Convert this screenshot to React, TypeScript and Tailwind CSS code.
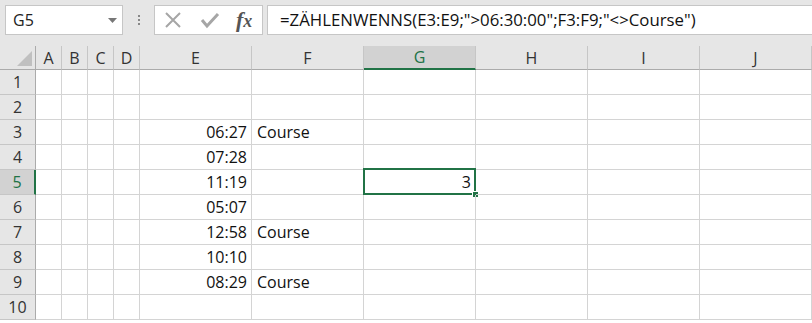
import React from "react";

const cols = [
  { key: "A", w: "w-[26px]" },
  { key: "B", w: "w-[26px]" },
  { key: "C", w: "w-[26px]" },
  { key: "D", w: "w-[26px]" },
  { key: "E", w: "w-[112px]" },
  { key: "F", w: "w-[112px]" },
  { key: "G", w: "w-[112px]" },
  { key: "H", w: "w-[112px]" },
  { key: "I", w: "w-[112px]" },
  { key: "J", w: "w-[112px]" },
];

const data: Record<number, { E?: string; F?: string; G?: string }> = {
  3: { E: "06:27", F: "Course" },
  4: { E: "07:28" },
  5: { E: "11:19", G: "3" },
  6: { E: "05:07" },
  7: { E: "12:58", F: "Course" },
  8: { E: "10:10" },
  9: { E: "08:29", F: "Course" },
};

const rows = [1, 2, 3, 4, 5, 6, 7, 8, 9, 10];

const FormulaBar = () => (
  <div className="flex items-start h-[46px] bg-[#e6e6e6] pt-[5px] pl-[5px]">
    <div className="flex items-center justify-between w-[118px] h-[30px] bg-white border border-[#c6c6c6] pl-[7px] pr-[5px]">
      <span className="text-[16px] text-[#222]">G5</span>
      <svg width="9" height="5" viewBox="0 0 9 5">
        <path d="M0 0 L9 0 L4.5 5 Z" fill="#777" />
      </svg>
    </div>
    <div className="flex flex-col items-center gap-[2px] w-[31px] h-[30px] justify-center">
      <span className="w-[2px] h-[2px] bg-[#888]" />
      <span className="w-[2px] h-[2px] bg-[#888]" />
      <span className="w-[2px] h-[2px] bg-[#888]" />
    </div>
    <div className="flex items-center w-[109px] h-[30px] bg-white border border-[#c6c6c6] pl-[9px]">
      <svg width="18" height="18" viewBox="0 0 18 18">
        <path d="M2 2 L16 16 M16 2 L2 16" stroke="#a6a6a6" strokeWidth="2" />
      </svg>
      <svg width="20" height="18" viewBox="0 0 20 18" className="ml-[18px]">
        <path d="M2 9 L7 15 L18 3" stroke="#a6a6a6" strokeWidth="3" fill="none" />
      </svg>
      <span
        className="ml-[16px] text-[22px] italic font-bold text-[#555] leading-none"
        style={{ fontFamily: '"Liberation Serif", serif' }}
      >
        f<span className="text-[18px]">x</span>
      </span>
    </div>
    <div className="flex items-center flex-1 h-[30px] bg-white border-y border-l border-[#c6c6c6] ml-[4px] pl-[12px]">
      <span className="text-[16.8px] text-[#111] whitespace-nowrap">
        =ZÄHLENWENNS(E3:E9;"&gt;06:30:00";F3:F9;"&lt;&gt;Course")
      </span>
    </div>
  </div>
);

const HeaderRow = () => (
  <div className="flex h-[24px] bg-[#e6e6e6]">
    <div className="relative w-[36px] border-r border-b border-[#ababab]">
      <svg className="absolute right-[3px] bottom-[3px]" width="15" height="15" viewBox="0 0 15 15">
        <path d="M15 0 L15 15 L0 15 Z" fill="#c0c0c0" />
      </svg>
    </div>
    {cols.map((c) =>
      c.key === "G" ? (
        <div
          key={c.key}
          className={`${c.w} flex items-center justify-center bg-[#d2d2d2] border-r border-[#c6c6c6] border-b-2 border-b-[#217346] text-[16px] text-[#217346]`}
        >
          {c.key}
        </div>
      ) : (
        <div
          key={c.key}
          className={`${c.w} flex items-center justify-center border-r border-[#c6c6c6] border-b border-b-[#ababab] text-[16px] text-[#333]`}
        >
          {c.key}
        </div>
      )
    )}
  </div>
);

const Row = ({ n }: { n: number }) => {
  const d = data[n] || {};
  const active = n === 5;
  return (
    <div className="flex h-[25px]">
      <div
        className={`w-[36px] flex items-center justify-center border-b border-[#c6c6c6] text-[16px] ${
          active
            ? "bg-[#d2d2d2] border-r-2 border-r-[#217346] text-[#217346]"
            : "bg-[#e6e6e6] border-r border-r-[#ababab] text-[#333]"
        }`}
      >
        {n}
      </div>
      {cols.map((c) => {
        const v = (d as Record<string, string>)[c.key];
        const right = c.key === "E" || c.key === "G";
        return (
          <div
            key={c.key}
            className={`${c.w} relative flex items-center border-r border-b border-[#d4d4d4] text-[16px] text-[#111] whitespace-nowrap ${
              right ? "justify-end pr-[4px]" : "justify-start pl-[5px]"
            }`}
          >
            {v}
            {active && c.key === "G" && (
              <>
                <div className="absolute -left-[1px] -top-[2px] -right-[1px] -bottom-[1px] border-2 border-[#217346]" />
                <div className="absolute -right-[4px] -bottom-[4px] w-[7px] h-[7px] bg-[#217346] border border-white" />
              </>
            )}
          </div>
        );
      })}
    </div>
  );
};

export default function App() {
  return (
    <div
      className="w-[812px] h-[323px] overflow-hidden bg-white"
      style={{ fontFamily: '"Open Sans", "Liberation Sans", sans-serif' }}
    >
      <FormulaBar />
      <HeaderRow />
      {rows.map((n) => (
        <Row key={n} n={n} />
      ))}
    </div>
  );
}
